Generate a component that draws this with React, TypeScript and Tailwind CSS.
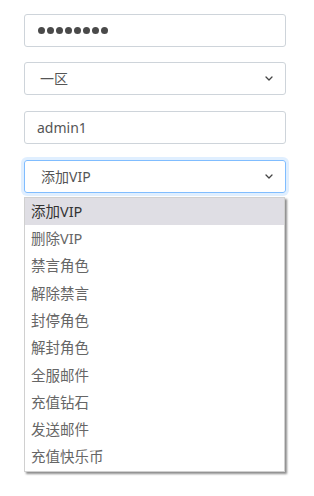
import React from "react";

const items = ["添加VIP", "删除VIP", "禁言角色", "解除禁言", "封停角色", "解封角色", "全服邮件", "充值钻石", "发送邮件", "充值快乐币"];

function Chevron() {
  return (
    <svg width="8" height="5" viewBox="0 0 8 5" className="shrink-0">
      <path d="M1 1 L4 4 L7 1" fill="none" stroke="#444" strokeWidth="1.3" strokeLinecap="round" strokeLinejoin="round" />
    </svg>
  );
}

export default function App() {
  const font = { fontFamily: '"Noto Sans", "Noto Sans CJK SC", sans-serif' };
  return (
    <div className="w-[314px] h-[496px] bg-white" style={font}>
      <div className="pt-[14px] pl-[24px] flex flex-col">
        <div className="w-[262px] h-[33px] border border-[#ced4da] rounded-[3px] flex items-center pl-[13px] gap-[2px]">
          {Array.from({ length: 8 }).map((_, i) => (
            <span key={i} className="w-[7px] h-[7px] rounded-full bg-[#4a4a4a] inline-block" />
          ))}
        </div>
        <div className="mt-[15px] w-[262px] h-[33px] border border-[#ced4da] rounded-[3px] flex items-center justify-between pl-[15px] pr-[12px] text-[14px] text-[#555]">
          <span>一区</span>
          <Chevron />
        </div>
        <div className="mt-[16px] w-[262px] h-[33px] border border-[#ced4da] rounded-[3px] flex items-center pl-[12px] text-[14px] text-[#555]">
          admin1
        </div>
        <div className="mt-[16px] w-[262px] h-[33px] border border-[#80bdff] rounded-[3px] flex items-center justify-between pl-[16px] pr-[12px] text-[14px] text-[#555] shadow-[0_0_0_3px_rgba(0,123,255,0.12)]">
          <span>添加VIP</span>
          <Chevron />
        </div>
        <div className="mt-[4px] w-[261px] border border-[#d0d0d0] bg-white shadow-[2px_2px_2px_rgba(0,0,0,0.45)]">
          {items.map((t, i) => (
            <div
              key={t}
              className={`h-[27.3px] flex items-center pl-[6px] text-[14.5px] ${i === 0 ? "bg-[#dfdee4] text-[#333]" : "text-[#666]"}`}
            >
              {t}
            </div>
          ))}
        </div>
      </div>
    </div>
  );
}
